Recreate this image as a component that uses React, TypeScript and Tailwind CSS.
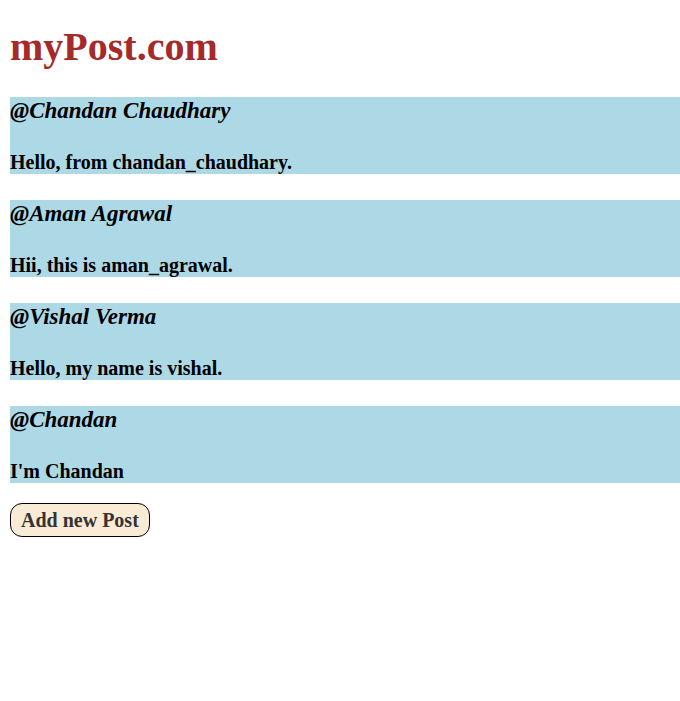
const posts = [
  { user: "Chandan Chaudhary", text: "Hello, from chandan_chaudhary." },
  { user: "Aman Agrawal", text: "Hii, this is aman_agrawal." },
  { user: "Vishal Verma", text: "Hello, my name is vishal." },
  { user: "Chandan", text: "I'm Chandan" },
];

export default function App() {
  return (
    <main className="min-h-screen bg-white pl-[10px] pt-6 font-['Liberation_Serif','Times_New_Roman',serif] font-bold text-black">
      <h1 className="mb-[27px] text-[40px] leading-[46px] text-[#a52a2a]">myPost.com</h1>
      <div className="flex flex-col gap-[26px]">
        {posts.map((post) => (
          <article key={post.user} className="bg-[#add8e6]">
            <h2 className="mb-[27px] text-[23px] leading-[27px] italic">@{post.user}</h2>
            <h3 className="text-[20px] leading-[23px]">{post.text}</h3>
          </article>
        ))}
      </div>
      <button
        type="button"
        className="mt-5 rounded-xl border border-black bg-[#faebd7] px-[10px] pt-[5px] pb-1 text-[20px] leading-[23px] text-[#333333]"
      >
        Add new Post
      </button>
    </main>
  );
}
